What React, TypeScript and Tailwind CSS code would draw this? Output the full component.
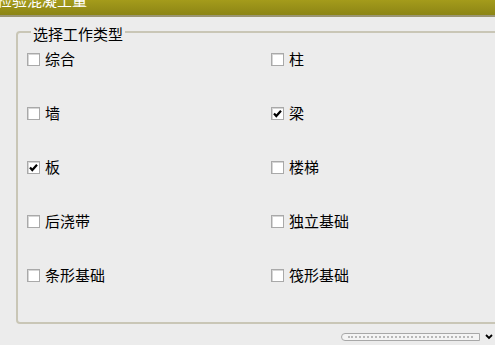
import React from "react";

const rows: { label: string; checked: boolean }[][] = [
  [
    { label: "综合", checked: false },
    { label: "柱", checked: false },
  ],
  [
    { label: "墙", checked: false },
    { label: "梁", checked: true },
  ],
  [
    { label: "板", checked: true },
    { label: "楼梯", checked: false },
  ],
  [
    { label: "后浇带", checked: false },
    { label: "独立基础", checked: false },
  ],
  [
    { label: "条形基础", checked: false },
    { label: "筏形基础", checked: false },
  ],
];

function CheckItem({ label, checked }: { label: string; checked: boolean }) {
  return (
    <label className="flex items-center gap-[5px] h-[20px] cursor-default">
      <span className="w-[13px] h-[13px] border border-[#a9a9a9] bg-white shadow-[inset_1px_1px_0_#d6d6d6] flex items-center justify-center shrink-0">
        {checked && (
          <svg width="11" height="11" viewBox="0 0 11 11">
            <path
              d="M2 5.5 L4.3 8 L9 2.8"
              fill="none"
              stroke="#000"
              strokeWidth="2.2"
            />
          </svg>
        )}
      </span>
      <span className="text-[15px] leading-[20px] text-black">{label}</span>
    </label>
  );
}

export default function App() {
  return (
    <div
      className="w-[495px] h-[345px] overflow-hidden bg-[#ececec] flex flex-col"
      style={{ fontFamily: '"Noto Sans CJK SC", "Noto Sans", sans-serif' }}
    >
      {/* title bar, cut off at the top */}
      <div className="h-[17px] shrink-0 overflow-hidden bg-gradient-to-b from-[#a49b1b] to-[#8c8515] border-b-2 border-[#9a9573]">
        <div className="-mt-[10px] -ml-[3px] text-[15px] leading-[20px] text-white">
          检验混凝土量
        </div>
      </div>

      <fieldset className="mt-[7px] ml-[16px] w-[495px] h-[300px] shrink-0 border-2 border-[#c9c6b6] rounded-[4px] px-[9px]">
        <legend className="ml-[4px] px-[2px] text-[15px] leading-[16px] text-black">
          <span className="relative top-[2px]">选择工作类型</span>
        </legend>
        <div className="mt-[9px] flex flex-col gap-y-[34px]">
          {rows.map((row, i) => (
            <div key={i} className="grid grid-cols-[244px_1fr]">
              {row.map((it) => (
                <CheckItem key={it.label} label={it.label} checked={it.checked} />
              ))}
            </div>
          ))}
        </div>
      </fieldset>

      <div className="mt-[9px] flex items-center justify-end">
        <div className="w-[139px] h-[8px] rounded-l-[4px] border border-[#a8a8a8] bg-[#f4f4f4] flex items-center px-[6px]">
          <div className="w-full border-t-2 border-dotted border-[#b8b8b8]" />
        </div>
        <svg width="15" height="8" viewBox="0 0 15 8">
          <path d="M6 2 L9 5 L12 2" fill="none" stroke="#000" strokeWidth="1.8" />
        </svg>
      </div>
    </div>
  );
}
